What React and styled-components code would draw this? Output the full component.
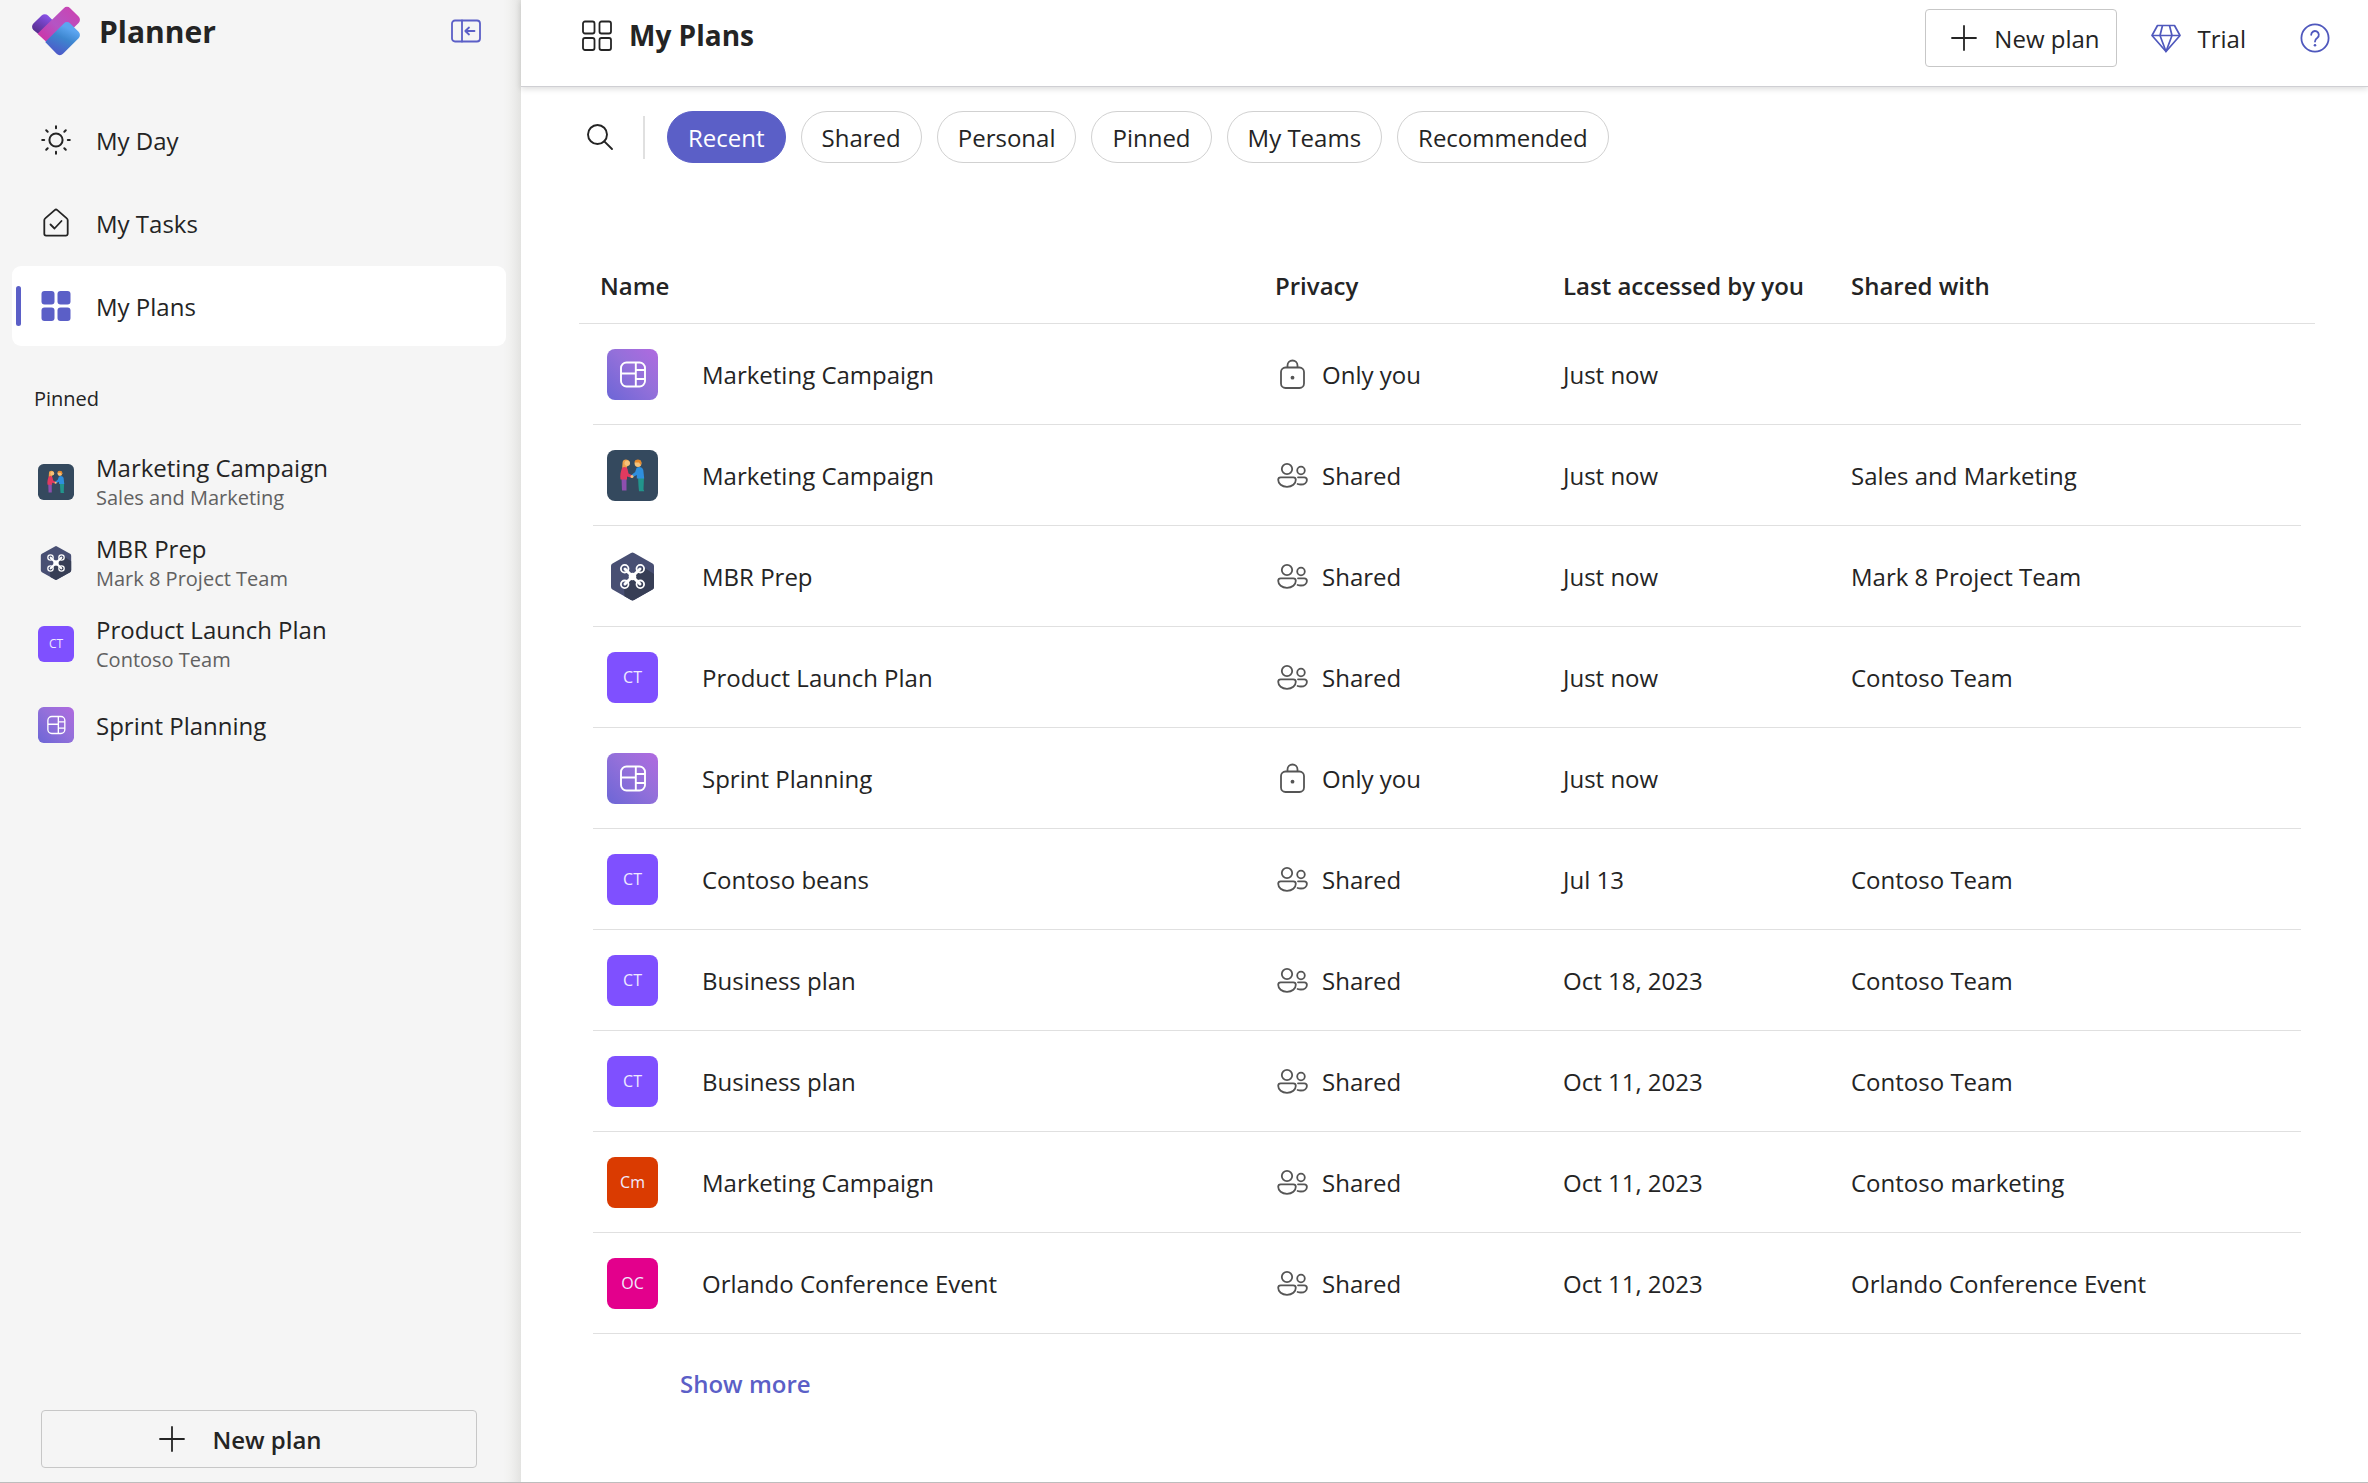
import { useState } from "react"
import styled, { createGlobalStyle } from "styled-components"

const GlobalStyle = createGlobalStyle`
  * {
    box-sizing: border-box;
  }
  body {
    margin: 0;
    background: #fff;
    color: #242424;
    font-family: "Open Sans", "Noto Sans", sans-serif;
    font-size: 24px;
    line-height: 30px;
  }
  button {
    font: inherit;
    color: inherit;
    background: none;
    border: 0;
    padding: 0;
    cursor: pointer;
  }
  svg {
    display: block;
    flex: none;
  }
`

const Page = styled.div`
  display: flex;
  min-height: 100vh;
  border-bottom: 1px solid #bdbdbd;
`

const Sidebar = styled.aside`
  display: flex;
  flex-direction: column;
  flex: none;
  width: 521px;
  background: linear-gradient(to left, #e3e3e1, #ebebea 6px, #f2f2f1 12px, #f5f5f5 18px);
`

const Brand = styled.div`
  display: flex;
  align-items: center;
  gap: 17px;
  height: 62px;
  padding: 0 40px 0 32px;
  margin-bottom: 38px;
`

const BrandName = styled.span`
  flex: 1;
  padding-top: 2px;
  font-size: 30px;
  font-weight: 700;
  line-height: 40px;
`

const IconButton = styled.button`
  display: flex;
`

// Text that sits next to an icon, dropped to line up with the icon's middle
const Label = styled.span`
  display: block;
  padding-top: 2px;
`

const Nav = styled.nav`
  display: flex;
  flex-direction: column;
  gap: 3px;
  padding: 0 15px 0 12px;
`

const NavItem = styled.a`
  display: flex;
  align-items: center;
  height: 80px;
  padding-left: 4px;
  border-radius: 9px;
  color: inherit;
  text-decoration: none;
  background: ${(p) => (p.$active ? "#fff" : "transparent")};

  &::before {
    content: "";
    width: 5px;
    height: 40px;
    margin-right: 17px;
    border-radius: 3px;
    background: ${(p) => (p.$active ? "#5b5fc7" : "transparent")};
  }

  svg {
    margin-right: 22px;
  }
`

const PinnedTitle = styled.h2`
  margin: 39px 34px 28px;
  font-size: 20px;
  font-weight: 400;
  line-height: 28px;
`

const PinnedList = styled.ul`
  margin: 0;
  padding: 0;
  list-style: none;
`

const PinnedLink = styled.a`
  display: flex;
  align-items: center;
  gap: 22px;
  height: 81px;
  padding-left: 38px;
  color: inherit;
  text-decoration: none;
`

const PinnedText = styled.span`
  display: flex;
  flex-direction: column;
  padding-top: 2px;
`

const PinnedTeam = styled.span`
  font-size: 20px;
  color: #616161;
`

const OutlineButton = styled.button`
  display: flex;
  align-items: center;
  gap: 16px;
  height: 58px;
  padding: 0 16px 0 24px;
  border: 1px solid #c7c7c7;
  border-radius: 4px;
`

const SidebarButton = styled(OutlineButton)`
  justify-content: center;
  gap: 26px;
  margin: auto 44px 14px 41px;
  padding: 0 38px 0 0;
  font-weight: 600;
`

const Main = styled.main`
  flex: 1;
  min-width: 0;
`

const Header = styled.header`
  display: flex;
  align-items: center;
  height: 87px;
  padding: 0 38px 14px 59px;
  border-bottom: 1px solid #cfcfd3;
  box-shadow: 0 2px 6px rgba(0, 0, 0, 0.14);
`

const Title = styled.h1`
  flex: 1;
  margin: 0 0 0 15px;
  padding-bottom: 3px;
  font-size: 28px;
  font-weight: 700;
  line-height: 38px;
`

const Actions = styled.div`
  display: flex;
  align-items: center;
  padding-top: 3px;
`

const TrialButton = styled.button`
  display: flex;
  align-items: center;
  gap: 17px;
  margin: 0 54px 0 34px;
`

const Content = styled.div`
  padding: 24px 53px 40px 58px;
`

const Filters = styled.div`
  display: flex;
  align-items: center;
  gap: 15px;
  margin-bottom: 86px;
  padding-left: 7px;
`

const Divider = styled.span`
  width: 2px;
  height: 43px;
  margin: 0 7px 0 14px;
  background: #e0e0e0;
`

const Chip = styled.button`
  height: 52px;
  padding: 0 20px;
  border: 1px solid ${(p) => (p.$active ? "#5b5fc7" : "#d1d1d1")};
  border-radius: 26px;
  color: ${(p) => (p.$active ? "#fff" : "inherit")};
  background: ${(p) => (p.$active ? "#5b5fc7" : "transparent")};
`

const Table = styled.table`
  display: block;

  thead,
  tbody {
    display: block;
  }
`

const Row = styled.tr`
  display: grid;
  grid-template-columns: 682fr 288fr 288fr 450fr;
  align-items: center;
  height: 101px;
  margin: 0 14px;
  border-bottom: 1px solid #e0e0e0;
`

const HeadRow = styled(Row)`
  height: 75px;
  margin: 0;
  padding: 0 14px;
`

const HeadCell = styled.th`
  padding: 0 0 0 ${(p) => (p.$first ? 7 : 0)}px;
  font-weight: 600;
  text-align: left;
`

const Cell = styled.td`
  padding: 0;
`

const NameCell = styled(Cell)`
  display: flex;
  align-items: center;
  gap: 44px;
  padding-left: 14px;
`

const PrivacyCell = styled(Cell)`
  display: flex;
  align-items: center;
  gap: 14px;
  padding-left: 1px;
`

const Initials = styled.span`
  display: flex;
  align-items: center;
  justify-content: center;
  flex: none;
  width: ${(p) => (p.$small ? 36 : 51)}px;
  height: ${(p) => (p.$small ? 36 : 51)}px;
  border-radius: ${(p) => (p.$small ? 6 : 8)}px;
  color: #f0eaff;
  font-size: ${(p) => (p.$small ? 12 : 16)}px;
  background: ${(p) => p.$color};
`

const ShowMore = styled.button`
  margin: 35px 0 0 101px;
  font-weight: 600;
  color: #5b5fc7;
`

const Logo = () => (
  <svg width="50" height="50" viewBox="0 0 50 50" aria-hidden="true">
    <defs>
      <linearGradient id="logoPurple" x1="0" y1="1" x2="0.6" y2="0">
        <stop offset="0" stopColor="#43206b" />
        <stop offset="1" stopColor="#8a52ea" />
      </linearGradient>
      <linearGradient id="logoPink" x1="0" y1="1" x2="1" y2="0">
        <stop offset="0" stopColor="#d8259b" />
        <stop offset="0.5" stopColor="#b455c4" />
        <stop offset="1" stopColor="#cf3fae" />
      </linearGradient>
      <linearGradient id="logoBlue" x1="0.8" y1="0" x2="0.3" y2="1">
        <stop offset="0.2" stopColor="#5ca5f0" />
        <stop offset="0.5" stopColor="#3d86cf" />
        <stop offset="1" stopColor="#4f55c8" />
      </linearGradient>
    </defs>
    <path
      d="M9.6 9.6a4.5 4.5 0 0 1 6.4 0l9 9-12.5 14.5L1.4 24a4.5 4.5 0 0 1 0-6.4z"
      fill="url(#logoPurple)"
    />
    <path
      d="M31.800 2.200a4.500 4.500 0 0 1 6.400 0l8.400 8.400a4.500 4.500 0 0 1 0 6.400L21 42 5.500 27.800z"
      fill="url(#logoPink)"
    />
    <path
      d="M31.800 17.400a4.500 4.500 0 0 1 6.400 0l8.400 8.400a4.500 4.500 0 0 1 0 6.400L31 47.800a4.500 4.500 0 0 1-6.400 0L13.200 36z"
      fill="url(#logoBlue)"
    />
  </svg>
)

const CollapseIcon = () => (
  <svg width="30" height="24" viewBox="0 0 30 24" fill="none" stroke="#5b5fc7" strokeWidth="1.8" strokeLinecap="round" strokeLinejoin="round">
    <rect x="1" y="1.5" width="28" height="21" rx="3" />
    <path d="M11 1.5v21M23.500 12h-9M18 8.500L14.300 12l3.700 3.500" />
  </svg>
)

const SunIcon = () => (
  <svg width="36" height="36" viewBox="0 0 36 36" fill="none" stroke="#242424" strokeWidth="2" strokeLinecap="round">
    <circle cx="18" cy="18" r="6.600" />
    <path d="M18 4.200v2M18 29.800v2M4.200 18h2M29.800 18h2M8.200 8.200l1.500 1.500M26.300 26.300l1.500 1.500M8.200 27.800l1.500-1.500M26.300 9.700l1.500-1.500" />
  </svg>
)

const TasksIcon = () => (
  <svg width="36" height="36" viewBox="0 0 36 36" fill="none" stroke="#242424" strokeWidth="1.8" strokeLinecap="round" strokeLinejoin="round">
    <path d="M16.700 5.100a2 2 0 0 1 2.600 0l9.500 8.300a2.500 2.500 0 0 1 .9 1.900v13.500a1.800 1.800 0 0 1-1.800 1.800H8.100a1.800 1.800 0 0 1-1.800-1.800V15.300a2.500 2.500 0 0 1 .9-1.900z" />
    <path d="M12.500 19.500l4 4 7-7.500" />
  </svg>
)

const PlansIcon = () => (
  <svg width="36" height="36" viewBox="0 0 36 36" fill="#5b5fc7">
    <rect x="3.500" y="3" width="13" height="13.500" rx="3" />
    <rect x="19.500" y="3" width="13" height="13.500" rx="3" />
    <rect x="3.500" y="19.500" width="13" height="13.500" rx="3" />
    <rect x="19.500" y="19.500" width="13" height="13.500" rx="3" />
  </svg>
)

const GridIcon = () => (
  <svg width="34" height="34" viewBox="0 0 34 34" fill="none" stroke="#242424" strokeWidth="1.8">
    <rect x="3" y="2.500" width="11.500" height="12" rx="2" />
    <rect x="19.500" y="2.500" width="11.500" height="12" rx="2" />
    <rect x="3" y="19" width="11.500" height="12" rx="2" />
    <rect x="19.500" y="19" width="11.500" height="12" rx="2" />
  </svg>
)

const PlusIcon = () => (
  <svg width="28" height="28" viewBox="0 0 28 28" fill="none" stroke="#242424" strokeWidth="1.8" strokeLinecap="round">
    <path d="M14 2v24M2 14h24" />
  </svg>
)

const DiamondIcon = () => (
  <svg width="30" height="30" viewBox="0 0 30 30" fill="none" stroke="#4f58bd" strokeWidth="1.7" strokeLinejoin="round">
    <path d="M6.500 2.500h17l5.500 10L15 28.500 1 12.500z" />
    <path d="M1 12.500h28M11.500 2.500l-2.500 10 6 16 6-16-2.500-10" />
  </svg>
)

const HelpIcon = () => (
  <svg width="30" height="30" viewBox="0 0 30 30" fill="none" stroke="#4f58bd" strokeWidth="1.8" strokeLinecap="round">
    <circle cx="15" cy="15" r="13.600" />
    <path d="M11.200 11.800a3.800 3.800 0 1 1 6.200 3c-1.600 1.200-2.400 2-2.400 3.700" />
    <circle cx="15" cy="22.200" r="1.300" fill="#4f58bd" stroke="none" />
  </svg>
)

const SearchIcon = () => (
  <svg width="28" height="28" viewBox="0 0 28 28" fill="none" stroke="#242424" strokeWidth="1.9" strokeLinecap="round">
    <circle cx="11.500" cy="11.500" r="9.500" />
    <path d="M18.300 18.300l7.700 7.700" />
  </svg>
)

const LockIcon = () => (
  <svg width="32" height="32" viewBox="0 0 32 32" fill="none" stroke="#555" strokeWidth="1.8">
    <rect x="5" y="9.500" width="23" height="20.500" rx="4.500" />
    <path d="M11.500 9.500V7.500a5 5 0 0 1 10 0v2" />
    <circle cx="16.500" cy="19.700" r="1.900" fill="#555" stroke="none" />
  </svg>
)

const PeopleIcon = () => (
  <svg width="32" height="32" viewBox="0 0 32 32" fill="none" stroke="#555" strokeWidth="1.8" strokeLinecap="round">
    <circle cx="11" cy="10" r="5.200" />
    <circle cx="25" cy="11.500" r="3.800" />
    <path d="M4.700 18.300h12.600a2.500 2.500 0 0 1 2.500 2.500c0 4-3.600 7-8.800 7s-8.800-3-8.800-7a2.500 2.500 0 0 1 2.500-2.500z" />
    <path d="M22 18.300h6.300a2.600 2.600 0 0 1 2.600 2.600c0 2.600-2.400 4.600-6 4.600-1.300 0-2.400-.2-3.300-.5" />
  </svg>
)

const BoardTile = ({ size }) => (
  <svg width={size} height={size} viewBox="0 0 51 51" aria-hidden="true">
    <defs>
      <linearGradient id="boardFill" x1="0" y1="1" x2="1" y2="0">
        <stop offset="0" stopColor="#6c66d6" />
        <stop offset="0.55" stopColor="#9470da" />
        <stop offset="1" stopColor="#b06ae0" />
      </linearGradient>
    </defs>
    <rect width="51" height="51" rx="8" fill="url(#boardFill)" />
    <g fill="none" stroke="#fff" strokeWidth="1.9">
      <rect x="14" y="13.500" width="24" height="24" rx="5.500" />
      <path d="M28.800 13.500v24M14 24.500h14.800M28.800 21h9.200M28.800 30h9.200" />
    </g>
  </svg>
)

const TeamTile = ({ size }) => (
  <svg width={size} height={size} viewBox="0 0 51 51" aria-hidden="true">
    <rect width="51" height="51" rx="8" fill="#34495e" />
    <path d="M14.500 28h5v12.500h-4.500z" fill="#8e4fae" />
    <path d="M15.500 13c0-5 7-4 7-.5 0 3-3 3-3 6.500h-4c-.5-2 0-4 0-6z" fill="#f0a14a" />
    <circle cx="20.300" cy="13.300" r="2.700" fill="#f7c27a" />
    <path d="M15 18c2-2 5-1 5.500 1l1 4.500 4 2-.8 2.300-4.700-1.300v3h-6.500c-.7-4 .2-8 1.500-11.500z" fill="#e23a5f" />
    <path d="M31 27h6l-.5 12.500.8 1.700H32l-.5-5z" fill="#22948c" />
    <circle cx="31" cy="13.500" r="3.400" fill="#f7c27a" />
    <path d="M27.500 12.500c0-4 7-4 7 .5l-.8 2-1.700-2.500z" fill="#e88a2c" />
    <path d="M29.500 18c3-2 6-.5 6.800 2l.9 8.500h-7.400v-3.500l-4.300 2.300-1-2.300 3.700-3z" fill="#2f8fdd" />
    <circle cx="25" cy="26.500" r="1.500" fill="#f7c27a" />
  </svg>
)

const DroneTile = ({ size }) => (
  <svg width={size} height={size} viewBox="0 0 51 51" aria-hidden="true">
    <path d="M24 2a3 3 0 0 1 3 0l18.500 10.500a3 3 0 0 1 1.500 2.600v20.800a3 3 0 0 1-1.500 2.600L27 49a3 3 0 0 1-3 0L5.500 38.500A3 3 0 0 1 4 35.900V15.100a3 3 0 0 1 1.500-2.600z" fill="#484f73" />
    <path d="M36 16l11 7v12.900a3 3 0 0 1-1.500 2.600L27 49a3 3 0 0 1-3 0l-6.500-3.800L17 36z" fill="#373e55" />
    <g fill="none" stroke="#fff" strokeWidth="1.8">
      <circle cx="17.700" cy="17.700" r="3.800" />
      <circle cx="33.300" cy="17.700" r="3.800" />
      <circle cx="17.700" cy="33.300" r="3.800" />
      <circle cx="33.300" cy="33.300" r="3.800" />
      <path d="M18 18l15 15M33 18L18 33" strokeWidth="3" strokeLinecap="round" />
    </g>
    <circle cx="25.500" cy="25.500" r="3.800" fill="#fff" />
  </svg>
)

const teams = {
  CT: "#7f50ff",
  Cm: "#da3b01",
  OC: "#e3008c",
}

const PlanTile = ({ kind, small }) => {
  const size = small ? 36 : 51
  if (kind === "board") return <BoardTile size={size} />
  if (kind === "team") return <TeamTile size={size} />
  if (kind === "drone") return <DroneTile size={size} />
  return (
    <Initials $small={small} $color={teams[kind]}>
      {kind}
    </Initials>
  )
}

const navItems = [
  { label: "My Day", icon: <SunIcon /> },
  { label: "My Tasks", icon: <TasksIcon /> },
  { label: "My Plans", icon: <PlansIcon />, active: true },
]

const pinned = [
  { kind: "team", name: "Marketing Campaign", team: "Sales and Marketing" },
  { kind: "drone", name: "MBR Prep", team: "Mark 8 Project Team" },
  { kind: "CT", name: "Product Launch Plan", team: "Contoso Team" },
  { kind: "board", name: "Sprint Planning" },
]

const filters = ["Recent", "Shared", "Personal", "Pinned", "My Teams", "Recommended"]

const plans = [
  { kind: "board", name: "Marketing Campaign", accessed: "Just now" },
  { kind: "team", name: "Marketing Campaign", accessed: "Just now", team: "Sales and Marketing" },
  { kind: "drone", name: "MBR Prep", accessed: "Just now", team: "Mark 8 Project Team" },
  { kind: "CT", name: "Product Launch Plan", accessed: "Just now", team: "Contoso Team" },
  { kind: "board", name: "Sprint Planning", accessed: "Just now" },
  { kind: "CT", name: "Contoso beans", accessed: "Jul 13", team: "Contoso Team" },
  { kind: "CT", name: "Business plan", accessed: "Oct 18, 2023", team: "Contoso Team" },
  { kind: "CT", name: "Business plan", accessed: "Oct 11, 2023", team: "Contoso Team" },
  { kind: "Cm", name: "Marketing Campaign", accessed: "Oct 11, 2023", team: "Contoso marketing" },
  { kind: "OC", name: "Orlando Conference Event", accessed: "Oct 11, 2023", team: "Orlando Conference Event" },
]

const App = () => {
  const [filter, setFilter] = useState("Recent")

  return (
    <Page>
      <GlobalStyle />
      <Sidebar>
        <Brand>
          <Logo />
          <BrandName>Planner</BrandName>
          <IconButton aria-label="Collapse navigation">
            <CollapseIcon />
          </IconButton>
        </Brand>
        <Nav>
          {navItems.map((item) => (
            <NavItem key={item.label} href="#" $active={item.active}>
              {item.icon}
              <Label>{item.label}</Label>
            </NavItem>
          ))}
        </Nav>
        <PinnedTitle>Pinned</PinnedTitle>
        <PinnedList>
          {pinned.map((plan) => (
            <li key={plan.name}>
              <PinnedLink href="#">
                <PlanTile kind={plan.kind} small />
                <PinnedText>
                  <span>{plan.name}</span>
                  {plan.team && <PinnedTeam>{plan.team}</PinnedTeam>}
                </PinnedText>
              </PinnedLink>
            </li>
          ))}
        </PinnedList>
        <SidebarButton>
          <PlusIcon />
          <Label>New plan</Label>
        </SidebarButton>
      </Sidebar>
      <Main>
        <Header>
          <GridIcon />
          <Title>My Plans</Title>
          <Actions>
            <OutlineButton>
              <PlusIcon />
              <Label>New plan</Label>
            </OutlineButton>
            <TrialButton>
              <DiamondIcon />
              <Label>Trial</Label>
            </TrialButton>
            <IconButton aria-label="Help">
              <HelpIcon />
            </IconButton>
          </Actions>
        </Header>
        <Content>
          <Filters>
            <IconButton aria-label="Search">
              <SearchIcon />
            </IconButton>
            <Divider />
            {filters.map((name) => (
              <Chip key={name} $active={name === filter} onClick={() => setFilter(name)}>
                <Label>{name}</Label>
              </Chip>
            ))}
          </Filters>
          <Table>
            <thead>
              <HeadRow>
                <HeadCell $first>Name</HeadCell>
                <HeadCell>Privacy</HeadCell>
                <HeadCell>Last accessed by you</HeadCell>
                <HeadCell>Shared with</HeadCell>
              </HeadRow>
            </thead>
            <tbody>
              {plans.map((plan, i) => (
                <Row key={i}>
                  <NameCell>
                    <PlanTile kind={plan.kind} />
                    <Label>{plan.name}</Label>
                  </NameCell>
                  <PrivacyCell>
                    {plan.team ? <PeopleIcon /> : <LockIcon />}
                    <Label>{plan.team ? "Shared" : "Only you"}</Label>
                  </PrivacyCell>
                  <Cell>
                    <Label>{plan.accessed}</Label>
                  </Cell>
                  <Cell>
                    <Label>{plan.team}</Label>
                  </Cell>
                </Row>
              ))}
            </tbody>
          </Table>
          <ShowMore>Show more</ShowMore>
        </Content>
      </Main>
    </Page>
  )
}

export default App
